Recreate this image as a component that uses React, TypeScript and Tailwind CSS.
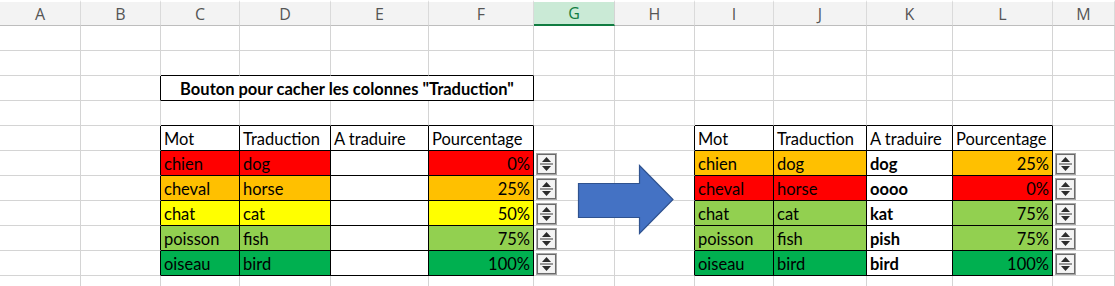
import React from "react";

const COLS = ["A", "B", "C", "D", "E", "F", "G", "H", "I", "J", "K", "L", "M"];

const RED = "bg-[#ff0000]";
const ORANGE = "bg-[#ffc000]";
const YELLOW = "bg-[#ffff00]";
const LGREEN = "bg-[#92d050]";
const GREEN = "bg-[#00b050]";
const WHITE = "bg-white";

type Cell = { text: string; bg: string; right?: boolean; bold?: boolean };

const leftTable: Cell[][] = [
  [
    { text: "Mot", bg: WHITE },
    { text: "Traduction", bg: WHITE },
    { text: "A traduire", bg: WHITE },
    { text: "Pourcentage", bg: WHITE },
  ],
  [
    { text: "chien", bg: RED },
    { text: "dog", bg: RED },
    { text: "", bg: WHITE },
    { text: "0%", bg: RED, right: true },
  ],
  [
    { text: "cheval", bg: ORANGE },
    { text: "horse", bg: ORANGE },
    { text: "", bg: WHITE },
    { text: "25%", bg: ORANGE, right: true },
  ],
  [
    { text: "chat", bg: YELLOW },
    { text: "cat", bg: YELLOW },
    { text: "", bg: WHITE },
    { text: "50%", bg: YELLOW, right: true },
  ],
  [
    { text: "poisson", bg: LGREEN },
    { text: "fish", bg: LGREEN },
    { text: "", bg: WHITE },
    { text: "75%", bg: LGREEN, right: true },
  ],
  [
    { text: "oiseau", bg: GREEN },
    { text: "bird", bg: GREEN },
    { text: "", bg: WHITE },
    { text: "100%", bg: GREEN, right: true },
  ],
];

const rightTable: Cell[][] = [
  [
    { text: "Mot", bg: WHITE },
    { text: "Traduction", bg: WHITE },
    { text: "A traduire", bg: WHITE },
    { text: "Pourcentage", bg: WHITE },
  ],
  [
    { text: "chien", bg: ORANGE },
    { text: "dog", bg: ORANGE },
    { text: "dog", bg: WHITE, bold: true },
    { text: "25%", bg: ORANGE, right: true },
  ],
  [
    { text: "cheval", bg: RED },
    { text: "horse", bg: RED },
    { text: "oooo", bg: WHITE, bold: true },
    { text: "0%", bg: RED, right: true },
  ],
  [
    { text: "chat", bg: LGREEN },
    { text: "cat", bg: LGREEN },
    { text: "kat", bg: WHITE, bold: true },
    { text: "75%", bg: LGREEN, right: true },
  ],
  [
    { text: "poisson", bg: LGREEN },
    { text: "fish", bg: LGREEN },
    { text: "pish", bg: WHITE, bold: true },
    { text: "75%", bg: LGREEN, right: true },
  ],
  [
    { text: "oiseau", bg: GREEN },
    { text: "bird", bg: GREEN },
    { text: "bird", bg: WHITE, bold: true },
    { text: "100%", bg: GREEN, right: true },
  ],
];

// rows are 1-based sheet rows, cols 0-based (A = 0)
const TITLE_ROW = 3;
const TABLE_FIRST_ROW = 5;
const TABLE_LAST_ROW = 10;
const LEFT_COL = 2; // C
const RIGHT_COL = 8; // I
const ROW_COUNT = 11;

function tableCell(r: number, c: number): Cell | null {
  if (r < TABLE_FIRST_ROW || r > TABLE_LAST_ROW) return null;
  const i = r - TABLE_FIRST_ROW;
  if (c >= LEFT_COL && c < LEFT_COL + 4) return leftTable[i][c - LEFT_COL];
  if (c >= RIGHT_COL && c < RIGHT_COL + 4) return rightTable[i][c - RIGHT_COL];
  return null;
}

function framed(r: number, c: number): boolean {
  if (r === TITLE_ROW && c >= LEFT_COL && c < LEFT_COL + 4) return true;
  return tableCell(r, c) !== null;
}

function hasSpinner(r: number, c: number): boolean {
  return r > TABLE_FIRST_ROW && r <= TABLE_LAST_ROW && (c === 6 || c === 12);
}

function Spinner() {
  return (
    <svg width="21" height="22" viewBox="0 0 21 22" className="relative z-10 mt-[2px] ml-[1px] shrink-0">
      <rect x="0.5" y="0.5" width="20" height="21" fill="#dcdcdc" stroke="#a6a6a6" />
      <rect x="1.5" y="1.5" width="18" height="19" fill="#f0f0f0" stroke="#6b6b6b" />
      <rect x="3" y="3" width="15" height="16" fill="#f4f4f4" />
      <line x1="4" y1="11" x2="17" y2="11" stroke="#3a3a3a" strokeWidth="1" />
      <polygon points="10.5,4 15,9 6,9" fill="#2b2b2b" />
      <polygon points="10.5,18 15,13 6,13" fill="#2b2b2b" />
    </svg>
  );
}

function SheetRow({ r }: { r: number }) {
  const cells: React.ReactNode[] = [];
  for (let c = 0; c < COLS.length; c++) {
    if (r === TITLE_ROW && c > LEFT_COL && c < LEFT_COL + 4) continue;
    const rightBlack = framed(r, c) || framed(r, c + 1);
    const bottomBlack = framed(r, c) || framed(r + 1, c);
    const borderR = rightBlack ? "border-r-black" : "border-r-[#d4d4d4]";
    const borderB = bottomBlack ? "border-b-black" : "border-b-[#d4d4d4]";

    if (r === TITLE_ROW && c === LEFT_COL) {
      cells.push(
        <div
          key={c}
          className={`col-span-4 flex items-center justify-center border-r border-b bg-white pt-[2px] font-bold text-black ${borderR} ${borderB}`}
        >
          Bouton pour cacher les colonnes "Traduction"
        </div>
      );
      continue;
    }

    const cell = tableCell(r, c);
    const bg = cell ? cell.bg : WHITE;
    const spin = hasSpinner(r, c);
    cells.push(
      <div
        key={c}
        className={`flex min-w-0 overflow-visible whitespace-nowrap border-r border-b text-black ${bg} ${borderR} ${borderB} ${
          spin ? "items-start px-px" : "items-center px-[3px] pt-[2px]"
        } ${cell?.right ? "justify-end" : "justify-start"} ${cell?.bold ? "font-bold" : "font-normal"}`}
      >
        {spin ? <Spinner /> : cell?.text}
      </div>
    );
  }
  return <>{cells}</>;
}

function BlueArrow() {
  return (
    <svg
      width="98"
      height="71"
      viewBox="0 0 98 71"
      className="pointer-events-none absolute left-[577px] top-[164px] z-20"
    >
      <polygon
        points="1.5,19.5 62.5,19.5 62.5,1.5 96,35.5 62.5,69.5 62.5,53.5 1.5,53.5"
        fill="#4472c4"
        stroke="#2f528f"
        strokeWidth="1.2"
        strokeLinejoin="miter"
      />
    </svg>
  );
}

export default function App() {
  const rows: number[] = [];
  for (let r = 1; r <= ROW_COUNT; r++) rows.push(r);

  return (
    <div className="relative h-[286px] w-[1115px] overflow-hidden bg-white text-[16.5px] leading-none [font-family:Lato,sans-serif]">
      <div className="grid grid-cols-[81px_80px_79px_91px_98px_105px_81px_80px_79px_93px_86px_100px_62px] grid-rows-[26px_repeat(11,25px)]">
        {COLS.map((col) =>
          col === "G" ? (
            <div
              key={col}
              className="flex items-center justify-center border-t-2 border-r border-b-2 border-t-white border-r-[#d4d4d4] border-b-[#107c41] bg-[#caead6] text-[16px] text-[#107c41] [font-family:'Open_Sans',sans-serif]"
            >
              {col}
            </div>
          ) : (
            <div
              key={col}
              className="flex items-center justify-center border-t-2 border-r border-b border-t-white border-r-[#dadada] border-b-[#bdbdbd] bg-[#f3f3f3] text-[16px] text-[#555555] [font-family:'Open_Sans',sans-serif]"
            >
              {col}
            </div>
          )
        )}
        {rows.map((r) => (
          <SheetRow key={r} r={r} />
        ))}
      </div>
      <BlueArrow />
    </div>
  );
}
